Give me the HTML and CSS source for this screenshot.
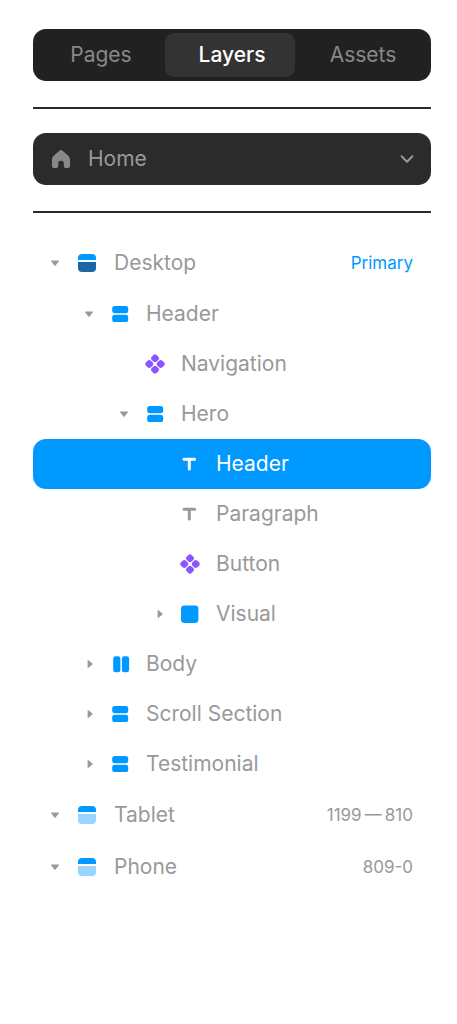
FILE: index.html
```html
<!DOCTYPE html>
<html lang="en">
<head>
<meta charset="utf-8">
<meta name="viewport" content="width=device-width, initial-scale=1">
<title>Layers</title>
<link rel="stylesheet" href="styles.css">
</head>
<body>
<svg class="sprite" aria-hidden="true">
  <symbol id="down" viewBox="0 0 10 10"><path d="M1.6 2.600h6.800q1 0 .3.900L5.600 7.400q-.6.600-1.200 0L1.300 3.500q-.7-.9.3-.9z"/></symbol>
  <symbol id="right" viewBox="0 0 10 10"><path d="M3.600 1.600v6.800q0 1 .9.300l3.900-3.100q.6-.6 0-1.200L4.500 1.300q-.9-.7-.9.300z"/></symbol>
  <symbol id="screen" viewBox="0 0 20 20"><path class="screen-top" d="M1 7V5q0-4 4-4h10q4 0 4 4v2z"/><path class="screen-body" d="M1 9h18v6q0 4-4 4H5q-4 0-4-4z"/></symbol>
  <symbol id="rows" viewBox="0 0 20 20"><rect x="2.200" y="2" width="16" height="7.200" rx="2.600"/><rect x="2.200" y="10.800" width="16" height="7.200" rx="2.600"/></symbol>
  <symbol id="columns" viewBox="0 0 20 20"><rect x="3.200" y="2.300" width="7.200" height="16" rx="2.400"/><rect x="11.900" y="2.300" width="7.200" height="16" rx="2.400"/></symbol>
  <symbol id="component" viewBox="0 0 20 20"><g transform="rotate(45 10 10)"><rect x="2.500" y="2.500" width="6.900" height="6.900" rx="2.300"/><rect x="10.600" y="2.500" width="6.900" height="6.900" rx="2.300"/><rect x="2.500" y="10.600" width="6.900" height="6.900" rx="2.300"/><rect x="10.600" y="10.600" width="6.900" height="6.900" rx="2.300"/></g></symbol>
  <symbol id="type" viewBox="0 0 20 20"><path d="M4 5.200h10.600M9.300 5.200v9.900" fill="none" stroke="currentColor" stroke-width="3" stroke-linecap="round"/></symbol>
  <symbol id="frame" viewBox="0 0 20 20"><rect x="1" y="1.600" width="17.400" height="17.400" rx="3.400"/></symbol>
</svg>
<main class="panel">
  <nav class="tabs" aria-label="Panels">
    <button class="tab" type="button">Pages</button>
    <button class="tab tab-active" type="button" aria-current="true">Layers</button>
    <button class="tab" type="button">Assets</button>
  </nav>
  <hr class="rule">
  <div class="page-picker">
    <svg class="home-icon" viewBox="0 0 20 20" aria-hidden="true"><path d="M8.400 1.700q1.600-1.300 3.200 0l6 5.200Q19 8.200 19 10v6.400q0 2.600-2.600 2.600h-1.600q-2 0-2-2v-2.800q0-2.400-2.800-2.400t-2.800 2.400V17q0 2-2 2H3.600Q1 19 1 16.400V10q0-1.800 1.400-3.100z"/></svg>
    <select class="page-select" aria-label="Page"><option>Home</option></select>
    <svg class="chevron" viewBox="0 0 16 16" aria-hidden="true"><path d="M2.600 5.300L8 10.700l5.400-5.400"/></svg>
  </div>
  <hr class="rule">
  <ul class="tree">
    <li class="row row-page"><button class="toggle" type="button" aria-label="Collapse Desktop"><svg><use href="#down"/></svg></button><svg class="icon primary"><use href="#screen"/></svg><button class="name" type="button">Desktop</button><span class="note note-primary">Primary</span></li>
    <li class="row level-1"><button class="toggle" type="button" aria-label="Collapse Header"><svg><use href="#down"/></svg></button><svg class="icon"><use href="#rows"/></svg><button class="name" type="button">Header</button></li>
    <li class="row level-2"><span class="toggle"></span><svg class="icon component"><use href="#component"/></svg><button class="name" type="button">Navigation</button></li>
    <li class="row level-2"><button class="toggle" type="button" aria-label="Collapse Hero"><svg><use href="#down"/></svg></button><svg class="icon"><use href="#rows"/></svg><button class="name" type="button">Hero</button></li>
    <li class="row level-3 selected"><span class="toggle"></span><svg class="icon"><use href="#type"/></svg><button class="name" type="button" aria-current="true">Header</button></li>
    <li class="row level-3"><span class="toggle"></span><svg class="icon"><use href="#type"/></svg><button class="name" type="button">Paragraph</button></li>
    <li class="row level-3"><span class="toggle"></span><svg class="icon component"><use href="#component"/></svg><button class="name" type="button">Button</button></li>
    <li class="row level-3"><button class="toggle" type="button" aria-label="Expand Visual"><svg><use href="#right"/></svg></button><svg class="icon"><use href="#frame"/></svg><button class="name" type="button">Visual</button></li>
    <li class="row level-1"><button class="toggle" type="button" aria-label="Expand Body"><svg><use href="#right"/></svg></button><svg class="icon"><use href="#columns"/></svg><button class="name" type="button">Body</button></li>
    <li class="row level-1"><button class="toggle" type="button" aria-label="Expand Scroll Section"><svg><use href="#right"/></svg></button><svg class="icon"><use href="#rows"/></svg><button class="name" type="button">Scroll Section</button></li>
    <li class="row level-1"><button class="toggle" type="button" aria-label="Expand Testimonial"><svg><use href="#right"/></svg></button><svg class="icon"><use href="#rows"/></svg><button class="name" type="button">Testimonial</button></li>
    <li class="row row-page"><button class="toggle" type="button" aria-label="Collapse Tablet"><svg><use href="#down"/></svg></button><svg class="icon"><use href="#screen"/></svg><button class="name" type="button">Tablet</button><span class="note">1199&thinsp;—&thinsp;810</span></li>
    <li class="row row-page"><button class="toggle" type="button" aria-label="Collapse Phone"><svg><use href="#down"/></svg></button><svg class="icon"><use href="#screen"/></svg><button class="name" type="button">Phone</button><span class="note">809-0</span></li>
  </ul>
</main>
</body>
</html>
```

FILE: styles.css
```css
* {
  box-sizing: border-box;
}

body {
  margin: 0;
  background: #fff;
  color: #999;
  font: 400 21px/28px Inter, "Liberation Sans", sans-serif;
}

button,
select {
  margin: 0;
  padding: 0;
  border: 0;
  background: none;
  color: inherit;
  font: inherit;
  cursor: pointer;
}

.sprite {
  position: absolute;
  width: 0;
  height: 0;
}

.panel {
  padding: 29px 26px 29px 33px;
}

.tabs {
  display: grid;
  grid-template-columns: 132fr 130fr 136fr;
  padding: 4px 0;
  border-radius: 13px;
  background: #212121;
}

.tab {
  height: 44px;
  padding-left: 4px;
  border-radius: 9px;
  color: #888;
}

.tab:last-child {
  padding-left: 0;
}

.tab-active {
  background: #333;
  color: #fff;
  font-weight: 500;
}

.rule {
  height: 2px;
  margin: 26px 0 24px;
  border: 0;
  background: #2b2b2b;
}

.page-picker {
  display: grid;
  grid-template-columns: 56px 1fr 40px;
  align-items: center;
  height: 52px;
  border-radius: 13px;
  background: #2b2b2b;
}

.home-icon {
  grid-area: 1 / 1;
  justify-self: center;
  width: 20px;
  height: 20px;
  fill: #888;
  pointer-events: none;
}

.page-select {
  grid-area: 1 / 1 / 2 / 4;
  width: 100%;
  height: 100%;
  padding-left: 55px;
  border-radius: 13px;
  appearance: none;
  color: #999;
}

.chevron {
  grid-area: 1 / 3;
  width: 16px;
  height: 16px;
  margin-left: 8px;
  fill: none;
  stroke: #999;
  stroke-width: 2;
  stroke-linecap: round;
  stroke-linejoin: round;
  pointer-events: none;
}

.tree {
  margin: 0;
  padding: 0;
  list-style: none;
}

.row {
  display: flex;
  align-items: center;
  gap: 16px;
  height: 50px;
  padding: 0 18px 0 17px;
}

.row-page {
  gap: 17px;
  height: 52px;
}

.level-1 {
  padding-left: 51px;
}

.level-2 {
  padding-left: 86px;
}

.level-3 {
  padding-left: 121px;
}

.selected {
  border-radius: 13px;
  background: #09f;
  color: #fff;
}

.toggle {
  display: flex;
  width: 10px;
  height: 10px;
}

.toggle svg {
  width: 10px;
  height: 10px;
  fill: #999;
}

.icon {
  flex: none;
  width: 20px;
  height: 20px;
  fill: #09f;
}

.primary {
  --screen: #1a66a6;
}

.screen-body {
  fill: var(--screen, #99d6ff);
}

.component {
  fill: #8855ff;
}

.name {
  flex: 1;
  text-align: left;
}

.note {
  font-size: 17px;
  line-height: 24px;
}

.note-primary {
  color: #09f;
}
```
